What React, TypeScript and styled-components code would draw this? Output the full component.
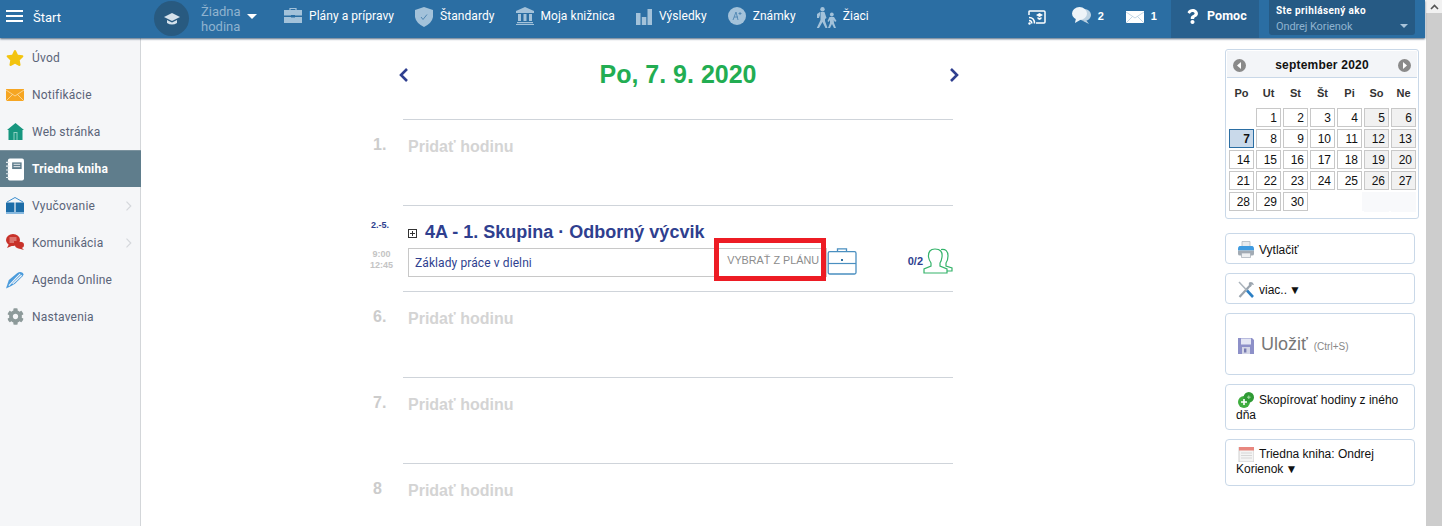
import React from "react";
import styled, { createGlobalStyle } from "styled-components";
import { FaStar, FaCog, FaQuestion } from "react-icons/fa";

const Global = createGlobalStyle`
  html, body { margin: 0; padding: 0; height: 526px; overflow: hidden; background: #fff; }
  * { box-sizing: border-box; }
`;

const Page = styled.div`
  display: flex;
  width: 1442px;
  height: 526px;
  overflow: hidden;
  font-family: "Liberation Sans", Arial, sans-serif;
`;
const Content = styled.div`
  width: 1425px;
  display: flex;
  flex-direction: column;
`;
const ScrollBar = styled.div`
  width: 17px;
  background: #fff;
  display: flex;
  flex-direction: column;
  border-left: 1px solid #fff;
`;
const ScrollArrow = styled.div`
  height: 13px;
  display: flex;
  align-items: center;
  justify-content: center;
  background: #f1f1f1;
`;
const ScrollThumb = styled.div`
  flex: 1;
  background: #cdcdcd;
`;

const Header = styled.header`
  height: 38px;
  flex: none;
  background: #2b6ea3;
  display: flex;
  align-items: flex-start;
  color: #fff;
  font-family: Roboto, sans-serif;
  font-size: 12px;
  letter-spacing: 0.06px;
  box-shadow: 0 1px 2px rgba(20, 50, 80, 0.75);
  position: relative;
  z-index: 2;
`;
const Burger = styled.div`
  width: 17px;
  height: 12px;
  margin: 10px 10px 0 6px;
  border-top: 2px solid #fff;
  border-bottom: 2px solid #fff;
  position: relative;
  &::after {
    content: "";
    position: absolute;
    left: 0;
    right: 0;
    top: 3px;
    height: 2px;
    background: #fff;
  }
`;
const StartLabel = styled.div`
  width: 121px;
  font-size: 13px;
  letter-spacing: 0;
  line-height: 35px;
`;
const Avatar = styled.div`
  width: 35px;
  height: 35px;
  margin-top: 1px;
  border-radius: 50%;
  background: #285a80;
  display: flex;
  align-items: center;
  justify-content: center;
`;
const LessonPick = styled.div`
  margin-left: 12px;
  width: 46px;
  color: #8fb3cf;
  font-size: 13px;
  line-height: 15px;
  padding-top: 4px;
  letter-spacing: 0;
`;
const Caret = styled.div`
  width: 0;
  height: 0;
  margin: 14px 27px 0 0;
  border-left: 5px solid transparent;
  border-right: 5px solid transparent;
  border-top: 5px solid #fff;
`;
const Nav = styled.nav`
  display: flex;
  gap: 21px;
`;
const NavItem = styled.div<{ $top?: number; $shift?: number }>`
  display: flex;
  align-items: flex-start;
  gap: 7px;
  line-height: 32px;
  height: 38px;
  white-space: nowrap;
  svg {
    margin: ${(p) => p.$top ?? 7}px ${(p) => p.$shift ?? 0}px 0;
    flex: none;
  }
`;
const Right = styled.div`
  margin-left: auto;
  display: flex;
  align-items: flex-start;
`;
const Count = styled.div`
  font-size: 11px;
  font-weight: 700;
  line-height: 32px;
  margin-left: 7px;
  font-family: "Liberation Sans", sans-serif;
`;
const Tool = styled.div<{ $iconTop?: number; $after?: number }>`
  display: flex;
  align-items: flex-start;
  margin-right: ${(p) => p.$after || 0}px;
  svg { margin-top: ${(p) => p.$iconTop ?? 7}px; }
`;
const Tools = styled.div`
  display: flex;
  gap: 22px;
  margin-right: 14px;
`;
const Help = styled.div`
  width: 88px;
  height: 38px;
  background: #28608e;
  display: flex;
  align-items: flex-start;
  gap: 7px;
  padding-left: 14px;
  font-size: 12.5px;
  font-weight: 700;
  line-height: 31px;
  svg { margin-top: 9px; }
`;
const Profile = styled.div`
  width: 146px;
  height: 35px;
  margin: 0 10px;
  padding: 3px 7px;
  background: #265a84;
  border-radius: 0 0 3px 3px;
  position: relative;
`;
const ProfileTop = styled.div`
  font-size: 10px;
  font-weight: 700;
  line-height: 15px;
  letter-spacing: 0.4px;
`;
const ProfileName = styled.div`
  font-size: 11px;
  line-height: 17px;
  letter-spacing: -0.1px;
  color: #8fb3cf;
`;
const ProfileCaret = styled.div`
  position: absolute;
  right: 7px;
  top: 24px;
  border-left: 4px solid transparent;
  border-right: 4px solid transparent;
  border-top: 4px solid #a9c4da;
`;

const Body = styled.div`
  flex: 1;
  display: flex;
  min-height: 0;
`;
const Sidebar = styled.aside`
  width: 141px;
  flex: none;
  background: #f5f6f8;
  border-right: 1px solid #d3d6d9;
  padding-top: 1px;
`;
const SideItem = styled.div<{ $active?: boolean }>`
  height: 37px;
  display: flex;
  align-items: center;
  padding-left: 6px;
  gap: 8px;
  margin-right: ${(p) => (p.$active ? "-1px" : "0")};
  font-family: Roboto, sans-serif;
  font-size: 12px;
  letter-spacing: 0.2px;
  color: ${(p) => (p.$active ? "#fff" : "#5a6478")};
  font-weight: ${(p) => (p.$active ? 700 : 400)};
  background: ${(p) => (p.$active ? "#5f7d8c" : "transparent")};
  border-top: ${(p) => (p.$active ? "1px solid #7b929e" : "none")};
`;
const SideIcon = styled.div`
  width: 18px;
  height: 18px;
  flex: none;
  display: flex;
  align-items: center;
  justify-content: center;
`;
const SideArrow = styled.span`
  margin-left: auto;
  margin-right: 7px;
  display: flex;
`;

const Main = styled.main`
  flex: 1;
  padding: 0 0 0 224px;
`;
const DayHead = styled.div`
  width: 595px;
  height: 81px;
  padding: 16px 0 0 33px;
  display: flex;
  justify-content: space-between;
`;
const DayTitle = styled.h1`
  margin: 0 2px 0 0;
  font-size: 25px;
  line-height: 41px;
  height: 41px;
  font-weight: 700;
  color: #22ad52;
`;
const Arrow = styled.div`
  padding-top: 14px;
  line-height: 0;
`;
const Slot = styled.section`
  display: grid;
  grid-template-columns: 38px 550px;
  height: 86px;
`;
const SlotSide = styled.div`
  padding-left: 5px;
`;
const SlotNum = styled.div`
  padding: 17px 0 0 3px;
  font-size: 16px;
  line-height: 18px;
  font-weight: 700;
  color: #ccc;
`;
const SlotRange = styled.div`
  padding: 15px 0 0 1px;
  font-size: 9px;
  line-height: 11px;
  font-weight: 700;
  color: #2f3f8f;
`;
const SlotTime = styled.div`
  padding-top: 18px;
  font-size: 9px;
  line-height: 11px;
  font-weight: 700;
  color: #c4c4c4;
  text-align: center;
  width: 23px;
`;
const SlotBody = styled.div`
  border-top: 1px solid #cfd4da;
  padding-left: 5px;
`;
const AddLesson = styled.div`
  padding-top: 18px;
  font-size: 16px;
  line-height: 18px;
  font-weight: 700;
  color: #d4d4d4;
`;
const LessonTitle = styled.div`
  display: flex;
  align-items: center;
  height: 42px;
  padding-top: 11px;
  font-size: 18px;
  font-weight: 700;
  color: #2f3f8f;
`;
const PlusBox = styled.span`
  width: 9px;
  height: 9px;
  flex: none;
  margin-right: 8px;
  margin-top: 2px;
  border: 1px solid #333;
  position: relative;
  &::before {
    content: "";
    position: absolute;
    left: 1px;
    right: 1px;
    top: 3px;
    height: 1px;
    background: #333;
  }
  &::after {
    content: "";
    position: absolute;
    top: 1px;
    bottom: 1px;
    left: 3px;
    width: 1px;
    background: #333;
  }
`;
const LessonRow = styled.div`
  display: flex;
  align-items: flex-start;
`;
const TopicBox = styled.div`
  width: 419px;
  height: 29px;
  flex: none;
  border: 1px solid #c8c8c8;
  position: relative;
  display: flex;
  align-items: center;
  padding-left: 6px;
  font-family: Roboto, sans-serif;
  font-size: 12px;
  letter-spacing: 0.1px;
  color: #2f3f8f;
`;
const PickPlan = styled.div`
  margin-left: auto;
  margin-right: 7px;
  margin-top: -6px;
  font-family: "Liberation Sans", sans-serif;
  font-size: 10.8px;
  letter-spacing: 0;
  color: #8c8c8c;
`;
const RedFrame = styled.div`
  position: absolute;
  left: 305px;
  top: -11px;
  width: 112px;
  height: 43px;
  border: 5px solid #ed1c24;
  pointer-events: none;
`;
const Pupils = styled.div`
  margin-left: auto;
  display: flex;
  align-items: flex-start;
  font-size: 11px;
  font-weight: 700;
  color: #2f3f8f;
  span { line-height: 26px; }
`;

const Aside = styled.aside`
  width: 194px;
  margin-right: 6px;
  padding-top: 11px;
  display: flex;
  flex-direction: column;
`;
const Calendar = styled.div`
  height: 170px;
  border: 1px solid #c9d8e8;
  border-radius: 3px;
  padding: 1px;
  margin-bottom: 14px;
`;
const CalHead = styled.div`
  height: 27px;
  background: #f3f5f8;
  border-bottom: 1px solid #c9d8e8;
  display: flex;
  align-items: center;
  justify-content: space-between;
  padding: 2px 6px 0;
  font-size: 12px;
  letter-spacing: 0.2px;
  font-weight: 700;
  color: #111;
`;
const CalNav = styled.span`
  width: 13px;
  height: 13px;
  border-radius: 50%;
  background: #8a8a8a;
  display: flex;
  align-items: center;
  justify-content: center;
`;
const CalGrid = styled.div`
  display: grid;
  grid-template-columns: repeat(7, 25px);
  grid-auto-rows: 19px;
  column-gap: 2px;
  row-gap: 2px;
  padding-left: 2px;
`;
const WeekDay = styled.div`
  height: 30px;
  line-height: 30px;
  font-size: 11px;
  font-weight: 700;
  text-align: center;
  color: #333;
`;
const WeekRow = styled.div`
  display: grid;
  grid-template-columns: repeat(7, 25px);
  column-gap: 2px;
  padding-left: 2px;
`;
const Cell = styled.div<{ $weekend?: boolean; $today?: boolean; $empty?: boolean }>`
  border: ${(p) => (p.$empty ? "none" : p.$today ? "1px solid #2b6ea3" : "1px solid #c8c8c8")};
  background: ${(p) => (p.$today ? "#c9d9ea" : p.$empty ? (p.$weekend ? "#f8f9fb" : "transparent") : p.$weekend ? "#f1f1f1" : "#fff")};
  box-shadow: ${(p) => (p.$empty && p.$weekend ? "-2px 0 0 #f8f9fb, 0 1px 0 #f8f9fb" : "none")};
  font-size: 12px;
  font-weight: ${(p) => (p.$today ? 700 : 400)};
  line-height: 18px;
  text-align: right;
  padding-right: 3px;
  color: #111;
`;
const Btn = styled.div<{ $height: number }>`
  height: ${(p) => p.$height}px;
  width: 190px;
  margin-bottom: 9px;
  border: 1px solid #c9d8e8;
  border-radius: 4px;
  padding: 7px 4px 0 10px;
  font-size: 12px;
  line-height: 15px;
  color: #111;
  svg { vertical-align: -4px; margin: 0 5px 0 2px; }
`;
const SaveBtn = styled(Btn)`
  padding-top: 18px;
  color: #777;
  font-size: 18px;
  line-height: 24px;
  svg { vertical-align: -4px; margin: 0 7px 0 2px; }
  small { font-size: 10px; color: #888; margin-left: 1px; }
`;
const Triangle = styled.span`
  margin-left: 2px;
`;

const GradIcon = () => (
  <svg width="16" height="14" viewBox="0 0 16 14">
    <path d="M8 1 L16 5 L8 9 L0 5 Z" fill="#d5e2ec" />
    <path d="M3 8 L8 10.5 L13 8 V11 Q8 14 3 11 Z" fill="#d5e2ec" />
  </svg>
);
const CaseIcon = () => (
  <svg width="18" height="17" viewBox="0 0 18 17">
    <path d="M6 3.5 V1.5 H12 V3.5" fill="none" stroke="#a3c2da" strokeWidth="1.2" />
    <path d="M0 3 H18 V8.5 H11 V8 H7 V8.5 H0 Z M0 10 H7 V10.5 H11 V10 H18 V16 H0 Z" fill="#a3c2da" />
  </svg>
);
const ShieldIcon = () => (
  <svg width="18" height="20" viewBox="0 0 18 20">
    <path d="M9 0 L18 3 V10 Q17 16 9 20 Q1 16 0 10 V3 Z" fill="#a3c2da" />
    <path d="M6 10 L8 12.5 L12 7.5" fill="none" stroke="#4f86b2" strokeWidth="1" />
  </svg>
);
const BankIcon = () => (
  <svg width="18" height="18" viewBox="0 0 18 18">
    <path d="M9 0 L18 4 V6 H0 V4 Z" fill="#a3c2da" />
    <path d="M2 7 H5 V14 H2 Z M7.5 7 H10.5 V14 H7.5 Z M13 7 H16 V14 H13 Z" fill="#a3c2da" />
    <path d="M1 15 H17 V16.2 H1 Z M0 17 H18 V18 H0 Z" fill="#a3c2da" />
  </svg>
);
const BarsIcon = () => (
  <svg width="16" height="16" viewBox="0 0 16 16">
    <rect x="0" y="4" width="4.5" height="12" fill="#a3c2da" />
    <rect x="5.8" y="8" width="4.5" height="8" fill="#a3c2da" />
    <rect x="11.5" y="0" width="4.5" height="16" fill="#a3c2da" />
  </svg>
);
const GradeIcon = () => (
  <svg width="18" height="18" viewBox="0 0 18 18">
    <circle cx="9" cy="9" r="9" fill="#a3c2da" />
    <path d="M5 13 L8 5 L10 13 M6 10 H10 M12 5 V8 M10.5 6.5 H13.5" stroke="#4f86b2" fill="none" strokeWidth="0.9" />
  </svg>
);
const PupilsIcon = () => (
  <svg width="21" height="21" viewBox="0 0 21 21">
    <circle cx="6.5" cy="2.2" r="2.2" fill="#a3c2da" />
    <path d="M4.5 5 H8.5 L10.5 11 L9 12 L9 14 L11.5 21 H9.5 L6.5 15 L3 21 H0.8 L4.5 13 Z" fill="#a3c2da" />
    <path d="M4 5 L1 7 V11 H3 L4 8 Z" fill="#a3c2da" />
    <circle cx="15.8" cy="7.5" r="1.9" fill="#a3c2da" />
    <path d="M13.5 10 H18 L20.5 14 L19 15 L17.7 13 L18 16 L20 21 H18 L16 17 L14 21 H12 L14 16 L14 13 L12.5 15 L11.5 14 Z" fill="#a3c2da" />
  </svg>
);
const CastIcon = () => (
  <svg width="18" height="16" viewBox="0 0 18 16">
    <path d="M1 6 V2.5 Q1 2 2 2 H16 Q17 2 17 3 V13 Q17 14 16 14 H8" fill="none" stroke="#fff" strokeWidth="1.5" />
    <path d="M1 8.5 Q6.5 8.5 6.5 14.5 M1 11.5 Q3.8 11.5 3.8 14.5" fill="none" stroke="#fff" strokeWidth="1.5" />
    <circle cx="1.5" cy="14.5" r="1.2" fill="#fff" />
    <path d="M8 6 L11.5 4 L15 6 L11.5 8 Z M9.5 8 L11.5 9 L13.5 8 V10 L11.5 11 L9.5 10 Z" fill="#fff" />
  </svg>
);
const BubblesIcon = () => (
  <svg width="19" height="18" viewBox="0 0 19 18">
    <ellipse cx="12.5" cy="8" rx="6.5" ry="6" fill="#bcd2e2" />
    <path d="M14 13 L17 17 L11 14 Z" fill="#bcd2e2" />
    <ellipse cx="7.5" cy="6.5" rx="7.5" ry="6.5" fill="#eef4f8" />
    <path d="M4 11 L3 16 L9 12.5 Z" fill="#eef4f8" />
  </svg>
);
const MailIcon = ({ w = 18, h = 12, fill = "#fff", line = "#a9c4da" }: any) => (
  <svg width={w} height={h} viewBox="0 0 18 12">
    <rect width="18" height="12" fill={fill} />
    <path d="M0 1 L9 7 L18 1 M0 12 L6.5 5.5 M18 12 L11.5 5.5" fill="none" stroke={line} strokeWidth="0.7" />
  </svg>
);
const HouseIcon = () => (
  <svg width="17" height="17" viewBox="0 0 17 17">
    <path d="M8.5 0 L17 7 H15.5 V17 H1.5 V7 H0 Z" fill="#17967f" />
    <path d="M6.5 9 H10.5 V17 H6.5 Z" fill="#8fd0c2" />
    <rect x="7.5" y="10" width="2" height="7" fill="#17967f" />
  </svg>
);
const NotebookIcon = () => (
  <svg width="19" height="23" viewBox="0 0 19 23">
    <rect x="2" y="0" width="17" height="23" rx="2" fill="#fff" />
    <rect x="6.5" y="4" width="10" height="7" fill="#5f7d8c" />
    <path d="M8 6 H15 M8 8.5 H15" stroke="#fff" strokeWidth="0.9" />
    <path d="M0 4 H3.5 M0 8 H3.5 M0 12 H3.5 M0 16 H3.5 M0 20 H3.5" stroke="#dfe6ea" strokeWidth="1.2" />
  </svg>
);
const BookIcon = () => (
  <svg width="18" height="17" viewBox="0 0 18 17">
    <path d="M1 5 L9 0.5 L17 5" fill="none" stroke="#3d8fcf" strokeWidth="1" />
    <path d="M0 5.5 H8.4 V15 H0 Z M9.6 5.5 H18 V15 H9.6 Z" fill="#1d6da8" />
    <path d="M0 16 H18" stroke="#3d8fcf" strokeWidth="1.2" />
  </svg>
);
const ChatIcon = () => (
  <svg width="18" height="17" viewBox="0 0 18 17">
    <ellipse cx="7" cy="6" rx="7" ry="6" fill="#c8322a" />
    <path d="M3 10 L1 14 L8 11 Z" fill="#c8322a" />
    <ellipse cx="13.5" cy="11" rx="4.5" ry="3.2" fill="#c8322a" />
    <path d="M15 13 L18 16 L11 14 Z" fill="#c8322a" />
    <path d="M3.5 4 H10.5 M3.5 6 H10.5 M3.5 8 H8" stroke="#f3c6c2" strokeWidth="0.9" />
  </svg>
);
const PenIcon = () => (
  <svg width="19" height="18" viewBox="0 0 19 18">
    <path d="M0 18 L3 9 L12 1.5 Q14.5 0 17 1 Q19.5 2.5 17.5 5 L9.5 13 Q5 16 0 18 Z" fill="#4a9bdc" />
    <path d="M3 15 L11 6.5 L15 2.5 M7 13 L16.5 4" fill="none" stroke="#f5f6f8" strokeWidth="1.2" />
  </svg>
);
const BriefcaseOutline = () => (
  <svg width="30" height="27" viewBox="0 0 30 27">
    <path d="M10.5 3.5 V0.8 H19.5 V3.5" fill="none" stroke="#4a8fc0" strokeWidth="1.3" />
    <rect x="1.2" y="3.7" width="27.8" height="22.3" rx="1.5" fill="none" stroke="#4a8fc0" strokeWidth="1.3" />
    <path d="M1 15.5 H29" stroke="#4a8fc0" strokeWidth="1.2" />
    <rect x="14" y="11" width="2" height="2" fill="#2f6f9f" />
  </svg>
);
const PeopleIcon = () => (
  <svg width="30" height="27" viewBox="0 0 30 27">
    <path d="M12 1 Q20 1 19 9 Q18.5 13 17 15 V18 L24 21 V25 H1 V21 L8 18 V15 Q6 12 5.5 9 Q5 1 12 1 Z" fill="none" stroke="#34b36a" strokeWidth="1.2" />
    <path d="M18 1.5 Q25 0.5 25 8 Q25 12 23 15 V18 L29 20 V23 H24" fill="none" stroke="#34b36a" strokeWidth="1.2" />
  </svg>
);
const PrintIcon = () => (
  <svg width="16" height="17" viewBox="0 0 16 17">
    <path d="M4 0.5 H12 V6 H4 Z" fill="#e8ebee" stroke="#a8b0b8" strokeWidth="0.7" />
    <path d="M1.5 5 H14.5 Q16 5.5 16 7.5 V9.5 H0 V7.5 Q0 5.5 1.5 5 Z" fill="#3f9be0" />
    <path d="M0 9.5 H16 V13 Q16 14.5 14 14.5 H2 Q0 14.5 0 13 Z" fill="#a2abb4" />
    <path d="M3.5 12 H12.5 V16.5 H3.5 Z" fill="#eef0f2" stroke="#a2abb4" strokeWidth="0.7" />
  </svg>
);
const ToolsIcon = () => (
  <svg width="16" height="17" viewBox="0 0 16 17">
    <path d="M1.5 16 L13 3.5" stroke="#9aa4ae" strokeWidth="2.2" />
    <path d="M11 1.5 Q15 0 16 4 L13.5 3.5 L13 6 Q10 5 11 1.5 Z" fill="#9aa4ae" />
    <path d="M1 1 L9 9.5" stroke="#aab3bb" strokeWidth="1.5" />
    <path d="M9 9.5 L15 16" stroke="#2b7fc4" strokeWidth="2.6" />
  </svg>
);
const SaveIcon = () => (
  <svg width="16" height="16" viewBox="0 0 16 16">
    <path d="M0 0 H14 L16 2 V16 H0 Z" fill="#8d90c8" />
    <rect x="3" y="0.5" width="10" height="6" fill="#e4e6f4" />
    <rect x="4" y="9" width="8" height="7" fill="#d3d5e6" />
    <rect x="6" y="10.5" width="2.4" height="4" fill="#777ab0" />
  </svg>
);
const CopyIcon = () => (
  <svg width="16" height="16" viewBox="0 0 16 16">
    <circle cx="6" cy="10" r="6" fill="#3fae3f" />
    <circle cx="10.8" cy="5.2" r="5.2" fill="#2f9a35" />
    <path d="M3 10 H9 M6 7 V13" stroke="#fff" strokeWidth="1.6" />
    <path d="M10.8 3.5 V7 M9 5.2 H12.6" stroke="#a8e0a8" strokeWidth="1" />
  </svg>
);
const PlannerIcon = () => (
  <svg width="16" height="15" viewBox="-1 0 16 15">
    <rect width="15" height="15" fill="#f4f4f4" stroke="#cfcfcf" />
    <rect width="15" height="3.5" fill="#e8877f" />
    <path d="M2 6 H13 M2 8.5 H13 M2 11 H13" stroke="#cfcfcf" strokeWidth="0.8" />
  </svg>
);
const Chevron = ({ left, w = 11, h = 14, color = "#2f3f8f", sw = 2.6 }: any) => (
  <svg width={w} height={h} viewBox="0 0 11 14">
    <path d={left ? "M9 1 L3 7 L9 13" : "M2 1 L8 7 L2 13"} fill="none" stroke={color} strokeWidth={sw} />
  </svg>
);

const navItems = [
  { icon: <CaseIcon />, label: "Plány a prípravy" },
  { icon: <ShieldIcon />, label: "Štandardy" },
  { icon: <BankIcon />, label: "Moja knižnica" },
  { icon: <BarsIcon />, label: "Výsledky", top: 9 },
  { icon: <GradeIcon />, label: "Známky" },
  { icon: <PupilsIcon />, label: "Žiaci", shift: -1 },
];

const sideItems = [
  { icon: <FaStar size={18} color="#f3c40f" />, label: "Úvod" },
  { icon: <MailIcon w={18} h={14} fill="#f6a623" line="#fde7bf" />, label: "Notifikácie" },
  { icon: <HouseIcon />, label: "Web stránka" },
  { icon: <NotebookIcon />, label: "Triedna kniha", active: true },
  { icon: <BookIcon />, label: "Vyučovanie", more: true },
  { icon: <ChatIcon />, label: "Komunikácia", more: true },
  { icon: <PenIcon />, label: "Agenda Online" },
  { icon: <FaCog size={17} color="#8d9a9a" />, label: "Nastavenia" },
];

const weeks: (number | null)[][] = [
  [null, 1, 2, 3, 4, 5, 6],
  [7, 8, 9, 10, 11, 12, 13],
  [14, 15, 16, 17, 18, 19, 20],
  [21, 22, 23, 24, 25, 26, 27],
  [28, 29, 30, null, null, null, null],
];

const EmptySlot = ({ num }: { num: string }) => (
  <Slot>
    <SlotSide>
      <SlotNum>{num}</SlotNum>
    </SlotSide>
    <SlotBody>
      <AddLesson>Pridať hodinu</AddLesson>
    </SlotBody>
  </Slot>
);

export default function App() {
  return (
    <Page>
      <Global />
      <Content>
        <Header>
          <Burger />
          <StartLabel>Štart</StartLabel>
          <Avatar>
            <GradIcon />
          </Avatar>
          <LessonPick>Žiadna hodina</LessonPick>
          <Caret />
          <Nav>
            {navItems.map((n) => (
              <NavItem key={n.label} $top={n.top} $shift={n.shift}>
                {n.icon}
                {n.label}
              </NavItem>
            ))}
          </Nav>
          <Right>
            <Tools>
              <Tool $after={4} $iconTop={9}>
                <CastIcon />
              </Tool>
              <Tool>
                <BubblesIcon />
                <Count>2</Count>
              </Tool>
              <Tool $iconTop={11}>
                <MailIcon />
                <Count>1</Count>
              </Tool>
            </Tools>
            <Help>
              <FaQuestion size={15} color="#fff" />
              Pomoc
            </Help>
            <Profile>
              <ProfileTop>Ste prihlásený ako</ProfileTop>
              <ProfileName>Ondrej Korienok</ProfileName>
              <ProfileCaret />
            </Profile>
          </Right>
        </Header>
        <Body>
          <Sidebar>
            {sideItems.map((s) => (
              <SideItem key={s.label} $active={s.active}>
                <SideIcon>{s.icon}</SideIcon>
                {s.label}
                {s.more && (
                  <SideArrow>
                    <Chevron w={8} h={10} color="#d4d7db" sw={1.6} />
                  </SideArrow>
                )}
              </SideItem>
            ))}
          </Sidebar>
          <Main>
            <DayHead>
              <Arrow>
                <Chevron left />
              </Arrow>
              <DayTitle>Po, 7. 9. 2020</DayTitle>
              <Arrow>
                <Chevron />
              </Arrow>
            </DayHead>
            <EmptySlot num="1." />
            <Slot>
              <SlotSide>
                <SlotRange>2.-5.</SlotRange>
                <SlotTime>
                  9:00
                  <br />
                  12:45
                </SlotTime>
              </SlotSide>
              <SlotBody>
                <LessonTitle>
                  <PlusBox />
                  4A - 1. Skupina · Odborný výcvik
                </LessonTitle>
                <LessonRow>
                  <TopicBox>
                    Základy práce v dielni
                    <PickPlan>VYBRAŤ Z PLÁNU</PickPlan>
                    <RedFrame />
                  </TopicBox>
                  <BriefcaseOutline />
                  <Pupils>
                    <span>0/2</span>
                    <PeopleIcon />
                  </Pupils>
                </LessonRow>
              </SlotBody>
            </Slot>
            <EmptySlot num="6." />
            <EmptySlot num="7." />
            <EmptySlot num="8" />
          </Main>
          <Aside>
            <Calendar>
              <CalHead>
                <CalNav>
                  <svg width="5" height="7" viewBox="0 0 5 7">
                    <path d="M4 0 L0 3.5 L4 7 Z" fill="#fff" />
                  </svg>
                </CalNav>
                september 2020
                <CalNav>
                  <svg width="5" height="7" viewBox="0 0 5 7">
                    <path d="M1 0 L5 3.5 L1 7 Z" fill="#fff" />
                  </svg>
                </CalNav>
              </CalHead>
              <WeekRow>
                {["Po", "Ut", "St", "Št", "Pi", "So", "Ne"].map((d) => (
                  <WeekDay key={d}>{d}</WeekDay>
                ))}
              </WeekRow>
              <CalGrid>
                {weeks.map((w, wi) =>
                  w.map((d, i) => (
                    <Cell key={`${wi}-${i}`} $weekend={i > 4} $today={d === 7} $empty={d === null}>
                      {d}
                    </Cell>
                  ))
                )}
              </CalGrid>
            </Calendar>
            <Btn $height={31}>
              <PrintIcon />
              Vytlačiť
            </Btn>
            <Btn $height={31}>
              <ToolsIcon />
              viac..<Triangle>▼</Triangle>
            </Btn>
            <SaveBtn $height={62}>
              <SaveIcon />
              Uložiť <small>(Ctrl+S)</small>
            </SaveBtn>
            <Btn $height={46}>
              <CopyIcon />
              Skopírovať hodiny z iného dňa
            </Btn>
            <Btn $height={47}>
              <PlannerIcon />
              Triedna kniha: Ondrej Korienok<Triangle>▼</Triangle>
            </Btn>
          </Aside>
        </Body>
      </Content>
      <ScrollBar>
        <ScrollArrow>
          <svg width="9" height="6" viewBox="0 0 9 6">
            <path d="M1 5 L4.5 1.5 L8 5" fill="none" stroke="#555" strokeWidth="1.6" />
          </svg>
        </ScrollArrow>
        <ScrollThumb />
      </ScrollBar>
    </Page>
  );
}
